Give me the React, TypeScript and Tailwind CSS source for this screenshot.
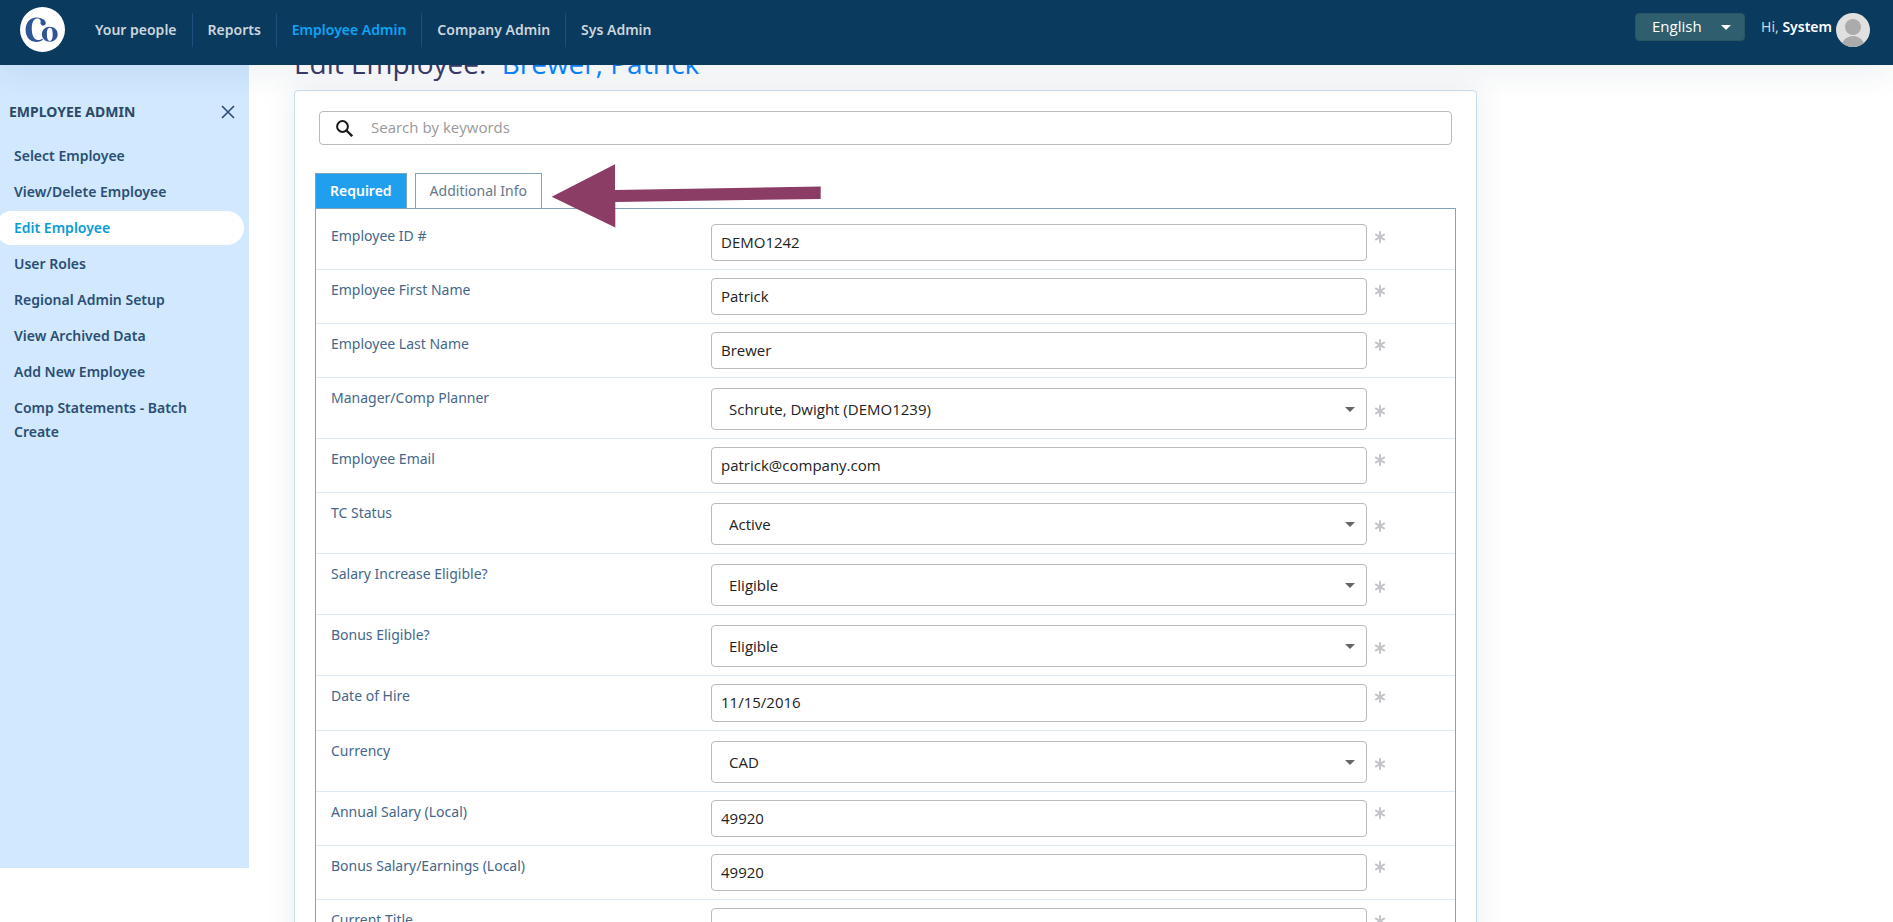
import React, { useState } from 'react';

interface Field {
  id: string;
  label: string;
  value: string;
  type: 'text' | 'date' | 'select';
}

const navItems = ['Your people', 'Reports', 'Employee Admin', 'Company Admin', 'Sys Admin'];

const sideItems = [
  'Select Employee',
  'View/Delete Employee',
  'Edit Employee',
  'User Roles',
  'Regional Admin Setup',
  'View Archived Data',
  'Add New Employee',
  'Comp Statements - Batch Create',
];

const fields: Field[] = [
  { id: 'employeeId', label: 'Employee ID #', value: 'DEMO1242', type: 'text' },
  { id: 'firstName', label: 'Employee First Name', value: 'Patrick', type: 'text' },
  { id: 'lastName', label: 'Employee Last Name', value: 'Brewer', type: 'text' },
  { id: 'manager', label: 'Manager/Comp Planner', value: 'Schrute, Dwight (DEMO1239)', type: 'select' },
  { id: 'email', label: 'Employee Email', value: 'patrick@company.com', type: 'text' },
  { id: 'tcStatus', label: 'TC Status', value: 'Active', type: 'select' },
  { id: 'salaryEligible', label: 'Salary Increase Eligible?', value: 'Eligible', type: 'select' },
  { id: 'bonusEligible', label: 'Bonus Eligible?', value: 'Eligible', type: 'select' },
  { id: 'hireDate', label: 'Date of Hire', value: '11/15/2016', type: 'date' },
  { id: 'currency', label: 'Currency', value: 'CAD', type: 'select' },
  { id: 'annualSalary', label: 'Annual Salary (Local)', value: '49920', type: 'text' },
  { id: 'bonusSalary', label: 'Bonus Salary/Earnings (Local)', value: '49920', type: 'text' },
  { id: 'title', label: 'Current Title', value: 'Manager', type: 'text' },
];

const Logo = () => (
  <svg viewBox="0 0 45 45" className="size-[45px]" aria-label="Home">
    <circle cx="22.5" cy="22.5" r="22.5" fill="#fff" />
    <g fill="#2f5597">
      <path d="M16.5 10.5c3.400 0 5.800 1.400 7.500 2.200.9.500 1.800 2 1.800 3.500a2.700 2.700 0 0 1-5.300.4c-.2-1.700.7-2.400-.2-3.700-.7-1-2-1.500-3.300-1.400-3.800.3-5.200 5-5.200 10.300 0 6.200 1.900 11 6.200 11.200 1.700.1 3.100-.5 4.200-1.600l.8 1.300c-1.900 1.500-4.300 2.200-7 2.200C9.500 34.900 5.600 29.700 5.600 22.800 5.600 15.700 9.900 10.500 16.500 10.500z" />
      <ellipse cx="29.800" cy="27.300" rx="8.800" ry="8.400" fill="#fff" />
      <path
        fillRule="evenodd"
        d="M29.800 19.800c4.600 0 7.900 3.200 7.900 7.500s-3.300 7.500-7.900 7.500-7.900-3.200-7.900-7.500 3.300-7.500 7.900-7.500zm0 .9c-2.200 0-2.900 2.800-2.900 6.600s.7 6.600 2.900 6.600 2.900-2.800 2.900-6.600-.7-6.600-2.900-6.600z"
      />
    </g>
  </svg>
);

const Caret = ({ className = '' }: { className?: string }) => (
  <svg viewBox="0 0 10 5" className={`h-[5px] w-[10px] pointer-events-none ${className}`} aria-hidden="true">
    <path d="M0 0h10L5 5z" fill="currentColor" />
  </svg>
);

const RequiredMark = ({ className }: { className: string }) => (
  <svg viewBox="0 0 12 12" className={`size-3 shrink-0 text-[#c3c5c9] ${className}`} aria-label="required">
    <path d="M6 .2v11.600M1.200 3.200l9.600 5.600M1.200 8.800l9.600-5.600" stroke="currentColor" strokeWidth="2" fill="none" />
  </svg>
);

const Header = () => (
  <header className="relative z-20 flex h-[65px] items-start justify-between bg-[#0b3a5f] shadow-[0_10px_30px_rgba(11,58,95,0.07)]">
    <div className="flex items-center pt-[7px] pl-5">
      <a href="#">
        <Logo />
      </a>
      <nav className="ml-[15px] flex">
        {navItems.map((item, i) => (
          <a
            key={item}
            href="#"
            className={`flex h-[34px] items-center px-[15px] font-semibold ${i > 0 ? 'border-l border-[#1f4e7d]' : ''} ${
              item === 'Employee Admin' ? 'text-[#0aa5f5]' : 'text-[#ccd6dc]'
            }`}
          >
            {item}
          </a>
        ))}
      </nav>
    </div>
    <div className="flex items-start pt-[13px] pr-[23px] text-white">
      <div className="relative">
        <select
          aria-label="Language"
          defaultValue="English"
          className="block h-7 w-[110px] appearance-none rounded-[4px] border border-[#2a5563] bg-[#2f5f6e] pl-4 font-['Open_Sans',sans-serif] text-[15px] font-medium"
        >
          <option>English</option>
        </select>
        <Caret className="absolute top-[12px] right-[14px]" />
      </div>
      <span className="ml-4 leading-7">
        <span className="text-[#ccd6dc]">Hi,</span> <b className="font-semibold">System</b>
      </span>
      <svg viewBox="0 0 34 34" className="ml-1 size-[34px]" aria-hidden="true">
        <clipPath id="avatarClip">
          <circle cx="17" cy="17" r="17" />
        </clipPath>
        <g clipPath="url(#avatarClip)">
          <path d="M0 0h34v34H0z" fill="#e0e0e0" />
          <circle cx="17" cy="14" r="8" fill="#ababab" />
          <circle cx="17" cy="35" r="12" fill="#ababab" />
        </g>
      </svg>
    </div>
  </header>
);

const Sidebar = () => (
  <aside className="h-[803px] w-[249px] shrink-0 bg-[#d1e8ff] pt-[35px]">
    <div className="flex items-center justify-between pr-[14px] pl-[9px]">
      <h2 className="leading-6 font-bold text-[#2b4a66]">EMPLOYEE ADMIN</h2>
      <button type="button" aria-label="Close menu" className="text-[#2b4a78]">
        <svg viewBox="0 0 14 14" className="size-[14px]">
          <path d="M1 1l12 12M13 1L1 13" stroke="currentColor" strokeWidth="1.600" />
        </svg>
      </button>
    </div>
    <ul className="mt-[15px] mr-[5px] -ml-[5px] flex flex-col gap-[2px]">
      {sideItems.map((item) => (
        <li key={item}>
          <a
            href="#"
            className={`block py-[5px] pr-10 pl-[19px] leading-6 font-semibold ${
              item === 'Edit Employee' ? 'rounded-[17px] bg-white text-[#0a9bd8]' : 'text-[#2b4f72]'
            }`}
          >
            {item}
          </a>
        </li>
      ))}
    </ul>
  </aside>
);

const FieldRow = ({ field }: { field: Field }) => {
  const [value, setValue] = useState(field.value);
  const isSelect = field.type === 'select';

  return (
    <div className={`flex items-start border-b border-[#dceaf5] pb-2 ${isSelect ? 'pt-[10px]' : 'pt-2'}`}>
      <label htmlFor={field.id} className={`w-[395px] shrink-0 pl-[15px] leading-6 text-[#44678a] ${isSelect ? '-mt-[2px]' : ''}`}>
        {field.label}
      </label>
      <div className="relative flex-1 font-['Open_Sans',sans-serif] text-[15px]">
        {isSelect ? (
          <>
            <select
              id={field.id}
              defaultValue={field.value}
              className="block h-[42px] w-full appearance-none rounded-[4px] border border-[#bbb] bg-white pt-[2px] pl-[17px] text-[#222]"
            >
              <option>{field.value}</option>
            </select>
            <Caret className="absolute top-[19px] right-[12px] text-[#666]" />
          </>
        ) : (
          <input
            id={field.id}
            value={value}
            onChange={(e) => setValue(e.target.value)}
            className={`block w-full rounded-[4px] border border-[#bbb] bg-white px-[9px] pb-[2px] text-[#222] ${
              field.type === 'date' ? 'h-[38px]' : 'h-[37px]'
            }`}
          />
        )}
      </div>
      <RequiredMark className={`mr-[69px] ml-[7px] ${isSelect ? 'mt-[17px]' : 'mt-[7px]'}`} />
    </div>
  );
};

const App: React.FC = () => {
  const [tab, setTab] = useState('Required');

  return (
    <div className="h-screen overflow-hidden bg-white font-['Noto_Sans',sans-serif] text-sm">
      <Header />
      <div className="flex items-start">
        <Sidebar />
        <main className="relative mr-[416px] ml-[45px] min-w-0 flex-1">
          <h1 className="-mt-[21px] pb-[7px] font-['Open_Sans',sans-serif] text-[28px] leading-[39px] text-[#3b3a66]">
            Edit Employee: <span className="ml-2 text-[#0a84ff]">Brewer, Patrick</span>
          </h1>
          <section className="rounded-[4px] border border-[#c9dcea] bg-white px-5 pt-5 shadow-[0_0_30px_rgba(20,60,90,0.10)]">
            <div className="mx-1 flex h-[34px] items-center rounded-[4px] border border-[#bbb]">
              <svg viewBox="0 0 17 17" className="ml-4 size-[17px] text-[#1a1a1a]" aria-hidden="true">
                <circle cx="6.500" cy="6.500" r="5.400" stroke="currentColor" strokeWidth="2" fill="none" />
                <path d="M10.500 10.500l5.700 5.700" stroke="currentColor" strokeWidth="2.400" />
              </svg>
              <input
                aria-label="Search"
                placeholder="Search by keywords"
                className="ml-[18px] flex-1 font-['Open_Sans',sans-serif] text-[15px] outline-none placeholder:text-[#999]"
              />
            </div>

            <div className="mt-7 flex gap-2">
              {['Required', 'Additional Info'].map((name) => (
                <button
                  key={name}
                  type="button"
                  onClick={() => setTab(name)}
                  className={`h-[35px] border border-b-0 border-[#7fa5b5] px-[14px] ${
                    tab === name ? 'bg-[#1f9fee] font-semibold text-white' : 'bg-white text-[#64788a]'
                  }`}
                >
                  {name}
                </button>
              ))}
            </div>
            <form className="border border-[#7fa5b5] pt-[7px]">
              {fields.map((field) => (
                <FieldRow key={field.id} field={field} />
              ))}
            </form>
          </section>

          {/* pointer to the second tab */}
          <svg viewBox="0 0 270 66" className="pointer-events-none absolute top-[99px] left-[257px] h-[66px] w-[270px]" aria-hidden="true">
            <path d="M.7 32.700L64 .3V26L269.700 22.500V35L64.300 38v25.500z" fill="#8b3d66" />
          </svg>
        </main>
      </div>
    </div>
  );
};

export default App;
